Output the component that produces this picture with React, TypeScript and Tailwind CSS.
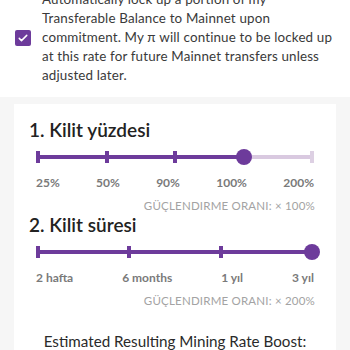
import React from 'react';

const purple = 'bg-[#6d3b9b]';

const Tick = ({ light = false }: { light?: boolean }) => (
  <div className={`w-[4px] h-[12px] shrink-0 ${light ? 'bg-[#ddd0e3]' : purple}`} />
);

const Seg = ({ light = false }: { light?: boolean }) => (
  <div className={`flex-1 h-[4px] ${light ? 'bg-[#d9c9e0]' : purple}`} />
);

const Thumb = () => (
  <div className={`w-[16px] h-[16px] rounded-full shrink-0 -mx-[6px] relative z-10 ${purple}`} />
);

const Boost = ({ value }: { value: string }) => (
  <div className="text-right text-[11.5px] leading-[16px] text-[#a3a3a3] tracking-[0.2px] pr-[6px] mt-[7px]">
    GÜÇLENDIRME ORANI: × {value}
  </div>
);

export default function App() {
  return (
    <div className="w-[350px] h-[350px] overflow-hidden bg-[#f6f6f6] font-['Lato','Noto_Sans',sans-serif]">
      {/* consent row */}
      <div className="bg-white h-[97px] overflow-hidden">
        <div className="flex items-center -mt-[10px] pl-[15px]">
          <div className="w-[16px] h-[16px] rounded-[2px] bg-[#6d3b9b] flex items-center justify-center shrink-0">
            <svg viewBox="0 0 16 16" className="w-[12px] h-[12px]" fill="none" stroke="white" strokeWidth={2} strokeLinecap="round" strokeLinejoin="round">
              <path d="M3 8.5l3 3 7-7" />
            </svg>
          </div>
          <p className="ml-[11px] text-[13.4px] leading-[19px] text-[#3a3a3a] w-[298px] tracking-[0.15px]">
            Automatically lock up a portion of my Transferable Balance to Mainnet upon commitment. My π will continue to be locked up at this rate for future Mainnet transfers unless adjusted later.
          </p>
        </div>
      </div>

      {/* card */}
      <div className="mx-[14px] mt-[7px] bg-white px-[15px] pt-[13px]">
        <h2 className="text-[19px] font-semibold text-[#222] leading-[26px]">1. Kilit yüzdesi</h2>
        <div className="px-[7px]">
          <div className="flex items-center mt-[6px] h-[16px]">
            <Tick /><Seg /><Tick /><Seg /><Tick /><Seg /><Thumb /><Seg light /><Tick light />
          </div>
          <div className="flex justify-between text-[12px] leading-[16px] font-bold text-[#7a7a7a] mt-[10px]">
            <span>25%</span><span>50%</span><span>90%</span><span>100%</span><span>200%</span>
          </div>
        </div>
        <Boost value="100%" />

        <h2 className="text-[19px] font-semibold text-[#222] leading-[26px] -mt-[2px]">2. Kilit süresi</h2>
        <div className="px-[7px]">
          <div className="flex items-center mt-[6px] h-[16px]">
            <Tick /><Seg /><Tick /><Seg /><Tick /><Seg /><Thumb />
          </div>
          <div className="flex justify-between text-[12px] leading-[16px] font-bold text-[#7a7a7a] mt-[10px]">
            <span>2 hafta</span><span>6 months</span><span>1 yıl</span><span>3 yıl</span>
          </div>
        </div>
        <Boost value="200%" />

        <p className="text-center text-[15.2px] leading-[22px] text-[#2a2a2a] mt-[21px] pb-4">Estimated Resulting Mining Rate Boost:</p>
      </div>
    </div>
  );
}
